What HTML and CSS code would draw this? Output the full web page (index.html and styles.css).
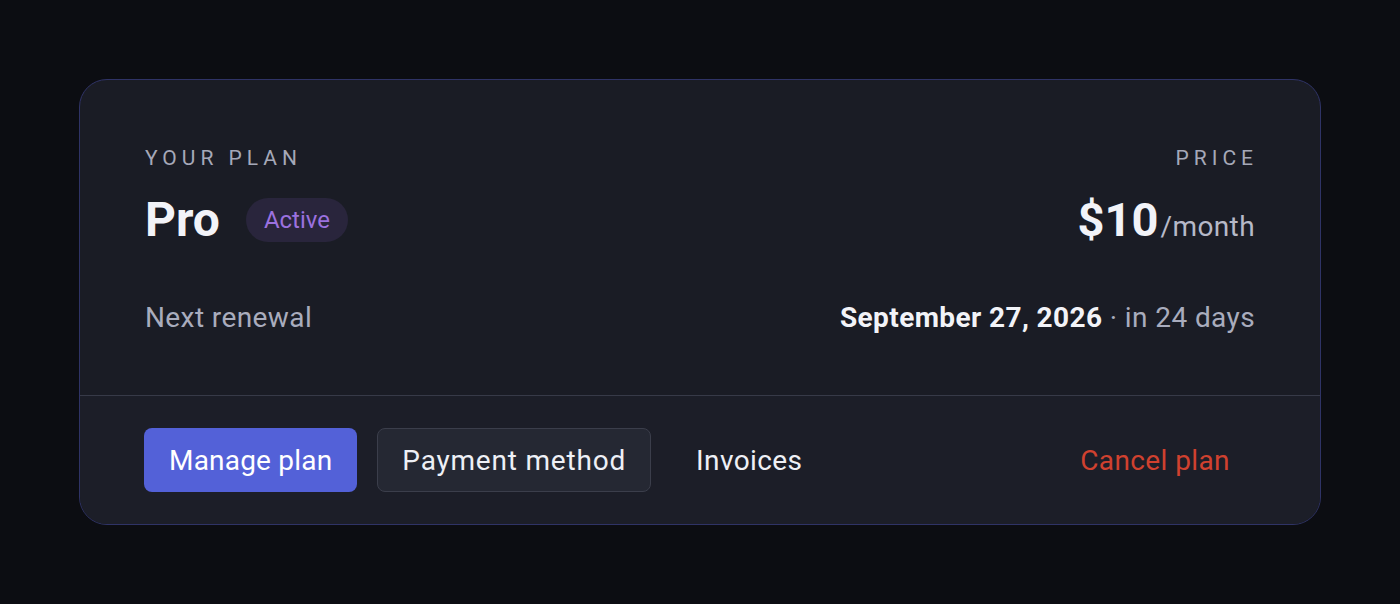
FILE: index.html
```html
<!DOCTYPE html>
<html lang="en">
<head>
<meta charset="utf-8">
<title>Plan</title>
<link rel="stylesheet" href="styles.css">
</head>
<body>
<div class="page">
  <section class="card">
    <div class="main">
      <div class="row top">
        <div class="col">
          <div class="label">YOUR PLAN</div>
          <div class="plan">
            <span class="plan-name">Pro</span>
            <span class="badge">Active</span>
          </div>
        </div>
        <div class="col right">
          <div class="label">PRICE</div>
          <div class="price"><span class="amount">$10</span><span class="per">/month</span></div>
        </div>
      </div>
      <div class="row renewal">
        <span class="muted">Next renewal</span>
        <span class="date"><strong>September 27, 2026</strong><span class="muted"> · in 24 days</span></span>
      </div>
    </div>
    <div class="footer">
      <button class="btn primary">Manage plan</button>
      <button class="btn secondary">Payment method</button>
      <button class="btn ghost">Invoices</button>
      <button class="btn danger">Cancel plan</button>
    </div>
  </section>
</div>
</body>
</html>
```
FILE: styles.css
```css
* { box-sizing: border-box; }
html, body { margin: 0; padding: 0; }
body {
  background: #0c0d12;
  font-family: Roboto, "Liberation Sans", sans-serif;
  color: #eef0f6;
}
.page {
  padding: 79px 79px;
}
.card {
  width: 1242px;
  height: 446px;
  border: 1px solid #2f3366;
  border-radius: 28px;
  background: #1a1c25;
  overflow: hidden;
  display: flex;
  flex-direction: column;
}
.main {
  height: 316px;
  padding: 66px 65px 0 65px;
  border-bottom: 1px solid #373a48;
}
.row {
  display: flex;
  justify-content: space-between;
}
.col { display: flex; flex-direction: column; }
.col.right { align-items: flex-end; }
.label {
  font-size: 21px;
  letter-spacing: 5px;
  color: #a5a8b8;
  line-height: 24px;
}
.col.right .label { margin-right: -3px; }
.plan {
  display: flex;
  align-items: center;
  gap: 26px;
  margin-top: 27px;
  height: 46px;
}
.plan-name {
  font-size: 48px;
  font-weight: 700;
  line-height: 46px;
  color: #f2f3f8;
}
.badge {
  background: #29253c;
  color: #9b71df;
  font-size: 24px;
  height: 44px;
  line-height: 44px;
  padding: 0 18px;
  border-radius: 22px;
}
.price {
  margin-top: 27px;
  height: 46px;
  line-height: 46px;
  display: flex;
  align-items: baseline;
}
.amount {
  font-size: 47px;
  font-weight: 700;
  color: #f2f3f8;
}
.per {
  font-size: 28px;
  letter-spacing: 0.4px;
  margin-left: 2px;
  color: #b6b9c8;
}
.renewal {
  margin-top: 57px;
  font-size: 28px;
  line-height: 36px;
  letter-spacing: 0.4px;
  align-items: baseline;
}
.muted { color: #a9acbd; }
.date strong { color: #f2f3f8; font-weight: 700; }
.footer {
  flex: 1;
  background: #1c1e28;
  display: flex;
  align-items: flex-start;
  gap: 20px;
  padding: 32px 65px 0 64px;
}
.btn {
  font-family: inherit;
  font-size: 28px;
  letter-spacing: 0.4px;
  height: 64px;
  padding: 0 24px;
  border-radius: 8px;
  border: 1px solid transparent;
  background: transparent;
  color: #eef0f6;
  cursor: pointer;
}
.btn.primary { background: #5361d8; color: #ffffff; letter-spacing: 0.2px; }
.btn.secondary { background: #252833; border-color: #3b3e4b; letter-spacing: 0.8px; }
.btn.danger { margin-left: auto; color: #d0412f; }
```
